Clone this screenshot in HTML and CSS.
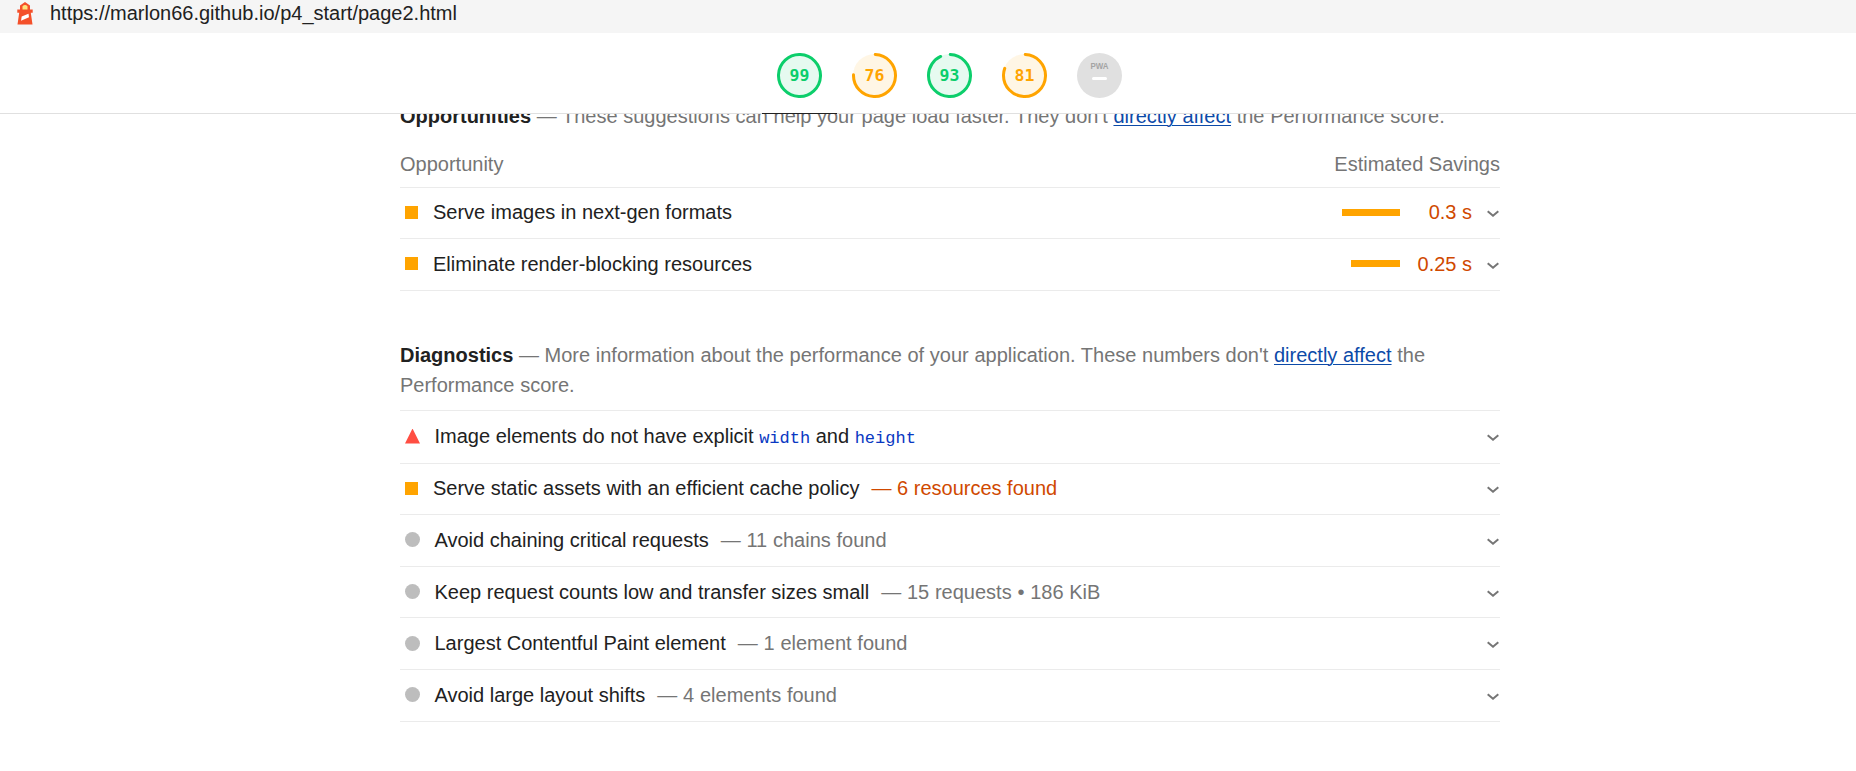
FILE: index.html
```
<!DOCTYPE html>
<html lang="en">
<head>
<meta charset="utf-8">
<title>Lighthouse Report</title>
<link rel="stylesheet" href="styles.css">
</head>
<body>
<svg class="defs" width="0" height="0">
  <symbol id="chevron" viewBox="0 0 12 8"><path d="M.7 1.200 6 5.800 11.300 1.200" fill="none" stroke="#757575" stroke-width="2"/></symbol>
</svg>
<div class="report">
  <div class="topbar">
    <svg class="logo" viewBox="0 0 16 23">
      <path d="M3 3.600 8 0l5 3.600V7.500H15.700v3.200H13.800L15.500 22.500H.5L2.200 10.700H.3V7.500H3z" fill="#f4502a"/>
      <path d="M5.500 7.500V4.300Q8 1.700 10.500 4.300V7.500z" fill="#ffe27a"/>
      <path d="M4.700 14.600 11.500 11.700 12 15.300 4 18.700z" fill="#fff"/>
    </svg>
    <span class="url">https://marlon66.github.io/p4_start/page2.html</span>
  </div>
  <div class="scores">
    <div class="score active pass">
      <svg class="gauge" viewBox="0 0 45 45"><circle class="base" cx="22.500" cy="22.500" r="21.500"/><circle class="arc" cx="22.500" cy="22.500" r="21" pathLength="100" stroke-dasharray="100 0"/></svg>
      <span class="value">99</span>
    </div>
    <div class="score average">
      <svg class="gauge" viewBox="0 0 45 45"><circle class="base" cx="22.500" cy="22.500" r="21.500"/><circle class="arc" cx="22.500" cy="22.500" r="21" pathLength="100" stroke-dasharray="75 25"/></svg>
      <span class="value">76</span>
    </div>
    <div class="score pass">
      <svg class="gauge" viewBox="0 0 45 45"><circle class="base" cx="22.500" cy="22.500" r="21.500"/><circle class="arc" cx="22.500" cy="22.500" r="21" pathLength="100" stroke-dasharray="92.500 7.500"/></svg>
      <span class="value">93</span>
    </div>
    <div class="score average">
      <svg class="gauge" viewBox="0 0 45 45"><circle class="base" cx="22.500" cy="22.500" r="21.500"/><circle class="arc" cx="22.500" cy="22.500" r="21" pathLength="100" stroke-dasharray="80 20"/></svg>
      <span class="value">81</span>
    </div>
    <div class="score">
      <svg class="gauge" viewBox="0 0 45 45"><circle cx="22.500" cy="22.500" r="22.500" fill="#e0e0e0"/><text class="pwa" x="22.500" y="16" text-anchor="middle" textLength="18" lengthAdjust="spacingAndGlyphs">PWA</text><rect x="15" y="24" width="15" height="3" rx="1.500" fill="#fff"/></svg>
    </div>
  </div>
  <div class="content">
    <section class="group opportunities">
      <p class="intro"><b>Opportunities</b> <span class="desc">— These suggestions can help your page load faster. They don't <a>directly affect</a> the Performance score.</span></p>
      <div class="columns"><span>Opportunity</span><span>Estimated Savings</span></div>
      <div class="audit"><i class="mark square"></i><span class="title">Serve images in next-gen formats</span><i class="bar" style="width:58px"></i><span class="savings">0.3 s</span><svg class="chevron"><use href="#chevron"/></svg></div>
      <div class="audit"><i class="mark square"></i><span class="title">Eliminate render-blocking resources</span><i class="bar" style="width:49px"></i><span class="savings">0.25 s</span><svg class="chevron"><use href="#chevron"/></svg></div>
    </section>
    <section class="group diagnostics">
      <p class="intro"><b>Diagnostics</b> <span class="desc">— More information about the performance of your application. These numbers don't <a>directly affect</a> the Performance score.</span></p>
      <div class="audit first"><i class="mark triangle"></i><span class="title">Image elements do not have explicit <code>width</code> and <code>height</code></span><svg class="chevron"><use href="#chevron"/></svg></div>
      <div class="audit"><i class="mark square"></i><span class="title">Serve static assets with an efficient cache policy<em class="warn">— 6 resources found</em></span><svg class="chevron"><use href="#chevron"/></svg></div>
      <div class="audit"><i class="mark circle"></i><span class="title">Avoid chaining critical requests<em>— 11 chains found</em></span><svg class="chevron"><use href="#chevron"/></svg></div>
      <div class="audit"><i class="mark circle"></i><span class="title">Keep request counts low and transfer sizes small<em>— 15 requests • 186 KiB</em></span><svg class="chevron"><use href="#chevron"/></svg></div>
      <div class="audit"><i class="mark circle"></i><span class="title">Largest Contentful Paint element<em>— 1 element found</em></span><svg class="chevron"><use href="#chevron"/></svg></div>
      <div class="audit"><i class="mark circle"></i><span class="title">Avoid large layout shifts<em>— 4 elements found</em></span><svg class="chevron"><use href="#chevron"/></svg></div>
    </section>
  </div>
</div>
</body>
</html>
```
FILE: styles.css
```
* { box-sizing: border-box; }
html, body { margin: 0; height: 771px; overflow: hidden; background: #fff; }
body { font: 20px/30px "Liberation Sans", Arial, sans-serif; color: #212121; }
.defs { display: block; }
.report { width: 1900px; }
.topbar { display: flex; height: 33px; padding-left: 17px; gap: 17px; background: #f5f5f5; }
.logo { width: 16px; height: 23px; margin-top: 2px; }
.url { line-height: 26px; }
.scores { position: relative; z-index: 1; display: flex; justify-content: center; height: 81px; padding-right: 1px; background: #fff; border-bottom: 1px solid #e0e0e0; }
.score { display: grid; width: 75px; height: 81px; padding-top: 20px; justify-items: center; align-items: start; }
.score > * { grid-area: 1 / 1; }
.active { border-bottom: 1px solid #212121; }
.gauge { display: block; width: 45px; height: 45px; }
.arc { fill: none; stroke: currentColor; stroke-width: 3; stroke-linecap: round; transform: rotate(-88deg); transform-origin: center; }
.base { fill: currentColor; fill-opacity: .1; }
.pass { color: #0cce6b; }
.average { color: #ffa400; }
.value { font: bold 16.500px/46px "DejaVu Sans Mono", monospace; }
.pwa { font: bold 9.500px "Liberation Sans", sans-serif; fill: #a4a4a4; }
.content { width: 1100px; margin: 0 auto; }
.intro { margin: 0; }
.desc { word-spacing: .100px; color: #757575; }
.intro b { color: #212121; }
.intro a { color: #0c4aa8; text-decoration: underline; text-underline-offset: 2px; text-decoration-thickness: 1px; }
.opportunities .intro { margin-top: -13px; }
.columns { display: flex; justify-content: space-between; height: 56px; padding-top: 18px; color: #757575; }
.audit { display: flex; align-items: center; height: 51.600px; padding: 0 1px 1px 5px; border-bottom: 1px solid #ebebeb; }
.columns + .audit { height: 52px; padding-bottom: 2px; }
.columns + .audit, .first { border-top: 1px solid #ebebeb; }
.mark { flex: none; width: 15px; height: 15px; margin-right: 14.500px; }
.square { width: 13px; height: 13px; margin-right: 15px; background: #ffa400; }
.circle { border-radius: 50%; background: #bdbdbd; }
.triangle { background: #ff4e42; clip-path: polygon(50% 0, 100% 100%, 0 100%); }
.title { flex: 1; }
.title em { margin-left: 12px; font-style: normal; word-spacing: .200px; color: #757575; }
.title em.warn, .savings { color: #d04900; }
.title em.warn { word-spacing: 0; }
code { font: 17px "Liberation Mono", monospace; color: #0938c2; }
.bar { height: 7px; background: #ffa400; }
.savings { width: 72px; text-align: right; }
.chevron { width: 12px; height: 8px; margin: 4px 0 0 15px; }
.diagnostics { padding-top: 49px; }
.diagnostics .intro { margin-bottom: 10px; }
.first { height: 54px; }
```
